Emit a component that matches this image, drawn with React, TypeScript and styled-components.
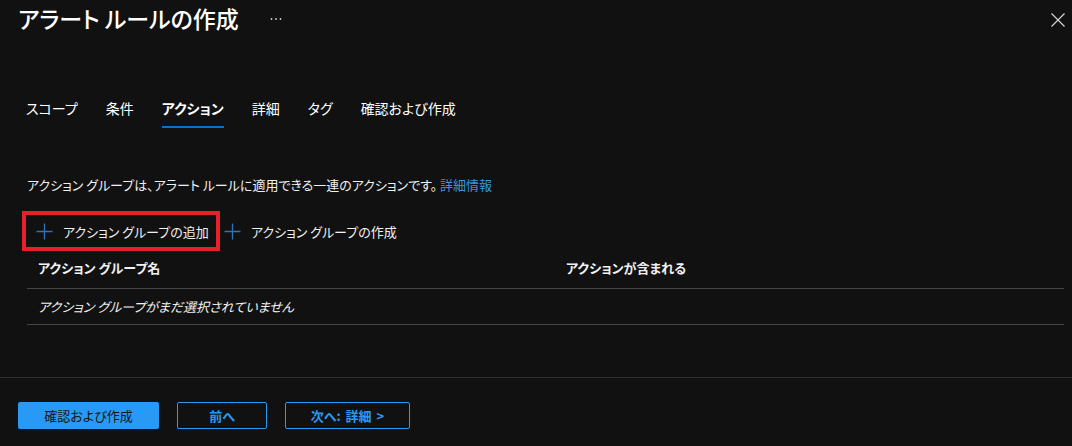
import styled, { createGlobalStyle } from 'styled-components';

const GlobalStyle = createGlobalStyle`
  html, body {
    margin: 0;
    padding: 0;
    background: #111111;
  }
  body {
    font-family: "Noto Sans CJK JP", "Noto Sans", sans-serif;
    font-feature-settings: "palt";
    color: #e8e8e8;
  }
`;

const Page = styled.div`
  width: 1072px;
  height: 446px;
  display: flex;
  flex-direction: column;
  background: #111111;
  overflow: hidden;
`;

const Header = styled.header`
  height: 36px;
  display: flex;
  align-items: center;
  padding: 0 7px 0 18px;
`;

const Title = styled.h1`
  margin: 0;
  font-size: 23px;
  font-weight: 500;
  line-height: 36px;
  color: #ffffff;
`;

const MoreButton = styled.button`
  margin-left: 31px;
  margin-top: 2px;
  display: flex;
  align-items: center;
  padding: 0;
  border: 0;
  background: none;
`;

const CloseButton = styled.button`
  margin-left: auto;
  margin-top: 3px;
  display: flex;
  padding: 0;
  border: 0;
  background: none;
`;

const TabBar = styled.nav`
  display: flex;
  gap: 28px;
  margin-top: 62px;
  padding-left: 26px;
`;

const Tab = styled.div<{ $active?: boolean }>`
  font-size: 14px;
  line-height: 20px;
  padding-bottom: 8px;
  color: #ffffff;
  font-weight: ${p => (p.$active ? 600 : 400)};
  border-bottom: 2px solid ${p => (p.$active ? '#1070c4' : 'transparent')};
`;

const Content = styled.main`
  padding: 0 8px 0 27px;
`;

const Description = styled.p`
  margin: 47px 0 0;
  font-size: 13px;
  line-height: 20px;
  color: #f0f0f0;
`;

const Link = styled.a`
  margin-left: 3px;
  color: #3a96dd;
  text-decoration: none;
`;

const CommandBar = styled.div`
  display: flex;
  align-items: center;
  margin-top: 16px;
`;

const Highlight = styled.div`
  margin-left: -5px;
  width: 190px;
  height: 32px;
  border: 4px solid #e8202a;
  display: flex;
  align-items: center;
`;

const CommandButton = styled.button<{ $padLeft: number }>`
  display: flex;
  align-items: center;
  gap: 10px;
  height: 32px;
  padding: 0 0 0 ${p => p.$padLeft}px;
  border: 0;
  background: none;
  font-family: inherit;
  font-feature-settings: "palt";
  font-size: 13px;
  color: #f0f0f0;
  white-space: nowrap;
`;

const Table = styled.div`
  display: flex;
  flex-direction: column;
`;

const Row = styled.div<{ $head?: boolean }>`
  display: grid;
  grid-template-columns: 528px 1fr;
  padding: ${p => (p.$head ? '7px 11px 10px' : '8px 11px 7px')};
  border-bottom: 1px solid #464646;
  font-size: 13px;
  line-height: 20px;
  font-weight: ${p => (p.$head ? 700 : 400)};
  font-style: ${p => (p.$head ? 'normal' : 'italic')};
  color: #f0f0f0;
`;

const Footer = styled.footer`
  margin-top: auto;
  height: 69px;
  border-top: 1px solid #303030;
  display: flex;
  align-items: flex-start;
  gap: 18px;
  padding: 24px 0 0 18px;
  box-sizing: border-box;
`;

const FooterButton = styled.button<{ $primary?: boolean; $width: number }>`
  width: ${p => p.$width}px;
  height: 27px;
  border-radius: 2px;
  border: 1px solid #2899f5;
  background: ${p => (p.$primary ? '#2899f5' : 'transparent')};
  color: ${p => (p.$primary ? '#161616' : '#2899f5')};
  font-family: inherit;
  font-feature-settings: "palt";
  font-size: 13px;
  font-weight: ${p => (p.$primary ? 400 : 600)};
  padding: 0;
  word-spacing: 2px;
`;

const PlusIcon = () => (
  <svg width="17" height="17" viewBox="0 0 17 17">
    <path d="M8.5 0.5v16M0.5 8.5h16" stroke="#2f74b8" strokeWidth="1.3" fill="none" />
  </svg>
);

const tabs = ['スコープ', '条件', 'アクション', '詳細', 'タグ', '確認および作成'];

const App = () => {
  return (
    <>
      <GlobalStyle />
      <Page>
        <Header>
          <Title>アラート ルールの作成</Title>
          <MoreButton aria-label="more">
            <svg width="12" height="4" viewBox="0 0 12 4">
              <circle cx="1.5" cy="2" r="0.9" fill="#d0d0d0" />
              <circle cx="6" cy="2" r="0.9" fill="#d0d0d0" />
              <circle cx="10.5" cy="2" r="0.9" fill="#d0d0d0" />
            </svg>
          </MoreButton>
          <CloseButton aria-label="close">
            <svg width="14" height="14" viewBox="0 0 14 14">
              <path d="M0.5 0.5l13 13M13.5 0.5l-13 13" stroke="#d8d8d8" strokeWidth="1.1" fill="none" />
            </svg>
          </CloseButton>
        </Header>

        <TabBar>
          {tabs.map(t => (
            <Tab key={t} $active={t === 'アクション'}>{t}</Tab>
          ))}
        </TabBar>

        <Content>
          <Description>
            アクション グループは、アラート ルールに適用できる一連のアクションです。<Link href="#">詳細情報</Link>
          </Description>

          <CommandBar>
            <Highlight>
              <CommandButton $padLeft={10}>
                <PlusIcon />
                アクション グループの追加
              </CommandButton>
            </Highlight>
            <CommandButton $padLeft={4}>
              <PlusIcon />
              アクション グループの作成
            </CommandButton>
          </CommandBar>

          <Table>
            <Row $head>
              <span>アクション グループ名</span>
              <span>アクションが含まれる</span>
            </Row>
            <Row>
              <span>アクション グループがまだ選択されていません</span>
            </Row>
          </Table>
        </Content>

        <Footer>
          <FooterButton $primary $width={141}>確認および作成</FooterButton>
          <FooterButton $width={90}>前へ</FooterButton>
          <FooterButton $width={125}>次へ: 詳細 &gt;</FooterButton>
        </Footer>
      </Page>
    </>
  );
};

export default App;
